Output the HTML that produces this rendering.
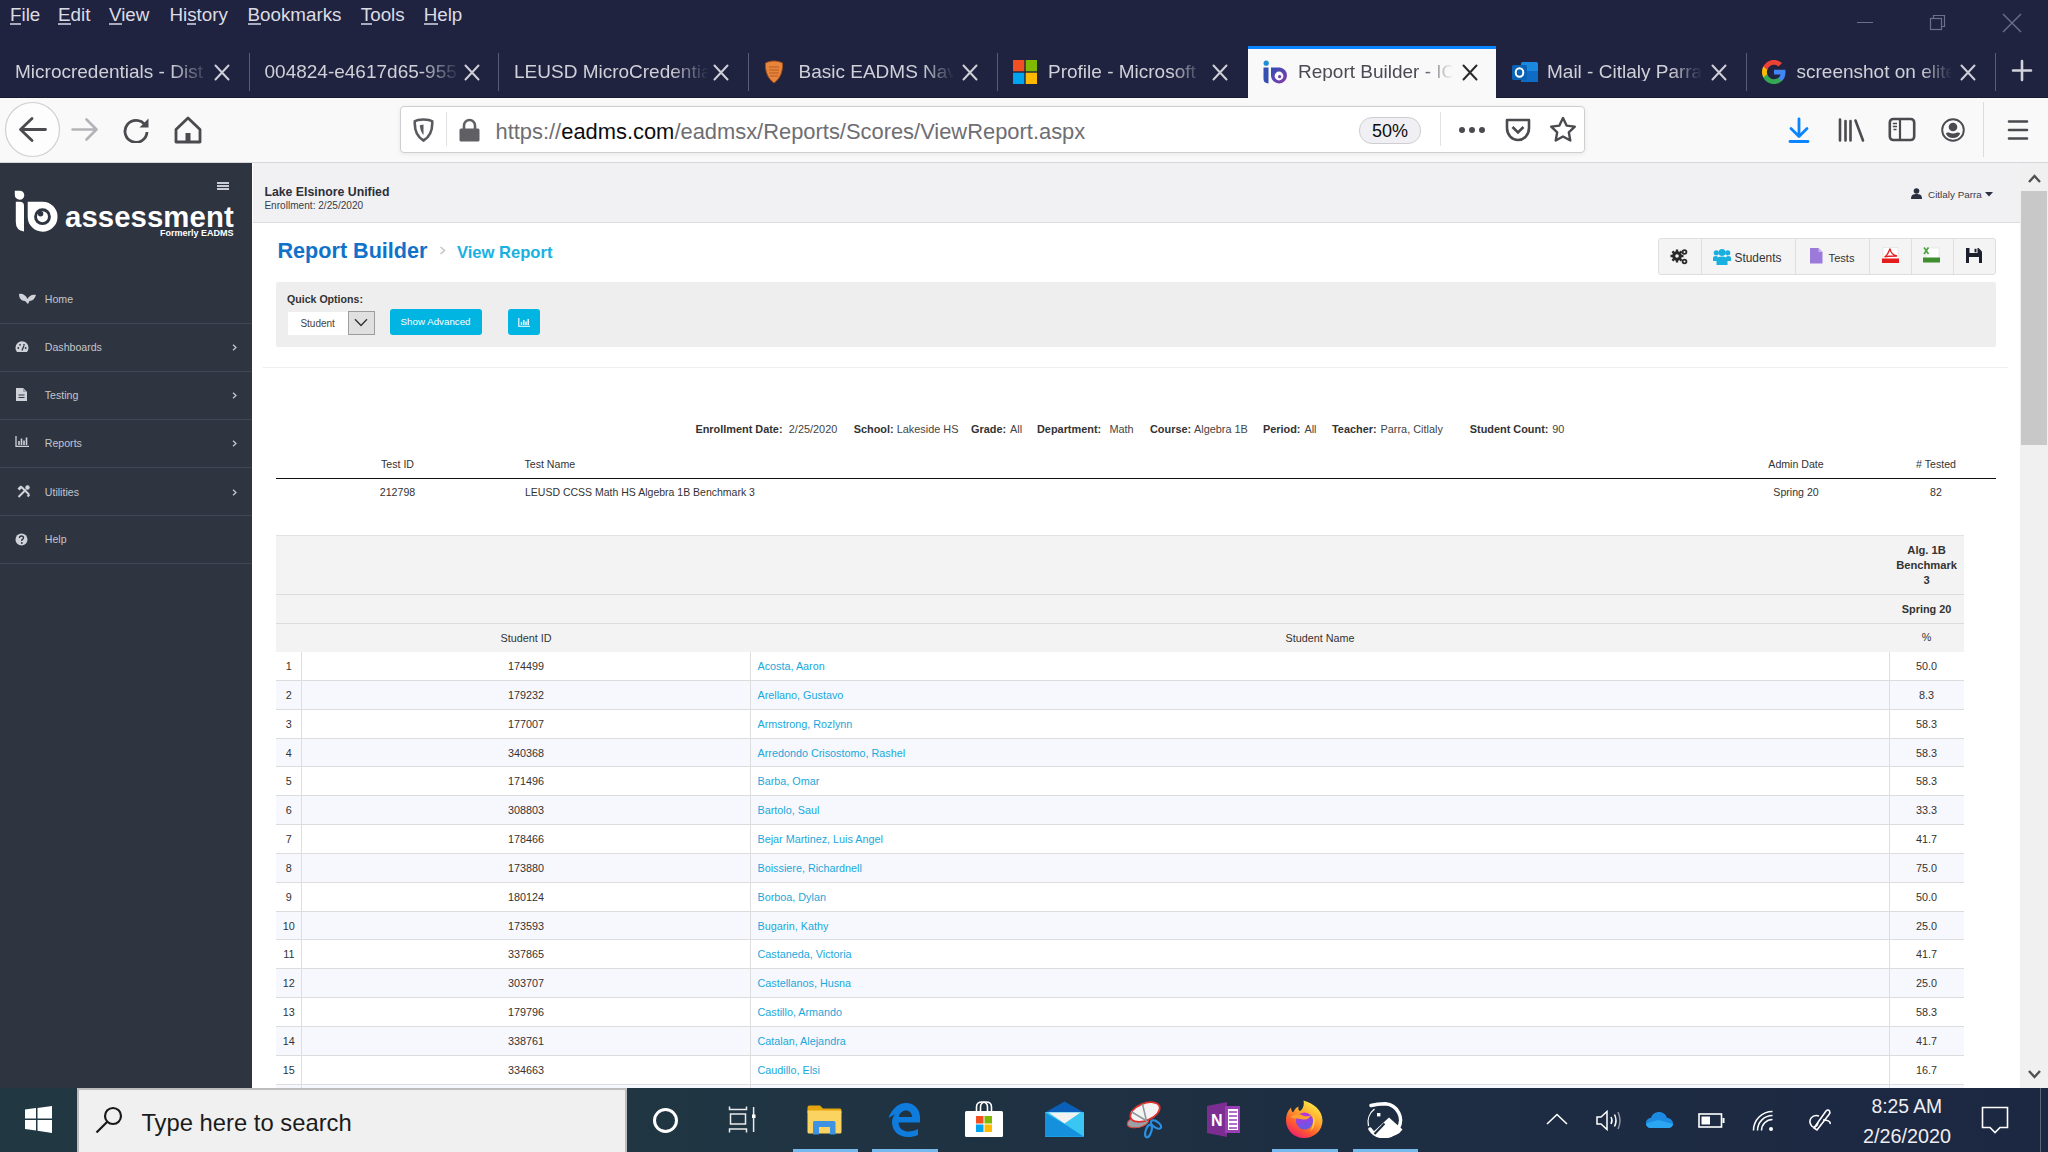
<!DOCTYPE html>
<html><head><meta charset="utf-8"><title>Report Builder</title>
<style>
html,body{margin:0;padding:0;}
body{width:2048px;height:1152px;overflow:hidden;position:relative;background:#fff;font-family:"Liberation Sans",sans-serif;}
.t{position:absolute;line-height:1;white-space:nowrap;}
.r{position:absolute;}
.fade{-webkit-mask-image:linear-gradient(to right,#000 80%,transparent 100%);mask-image:linear-gradient(to right,#000 80%,transparent 100%);overflow:hidden;}
</style></head><body>

<div class="r" style="left:0px;top:0px;width:2048px;height:98px;background:#202340;"></div>
<div class="r" style="left:0px;top:97px;width:2048px;height:1px;background:#181a30;"></div>
<div class="t " style="left:10.00px;top:5.99px;font-size:18.8px;color:#dcdce4;">File</div>
<div class="t " style="left:58.00px;top:5.99px;font-size:18.8px;color:#dcdce4;">Edit</div>
<div class="t " style="left:109.00px;top:5.99px;font-size:18.8px;color:#dcdce4;">View</div>
<div class="t " style="left:169.40px;top:5.99px;font-size:18.8px;color:#dcdce4;">History</div>
<div class="t " style="left:247.50px;top:5.99px;font-size:18.8px;color:#dcdce4;">Bookmarks</div>
<div class="t " style="left:360.80px;top:5.99px;font-size:18.8px;color:#dcdce4;">Tools</div>
<div class="t " style="left:423.70px;top:5.99px;font-size:18.8px;color:#dcdce4;">Help</div>
<div class="r" style="left:10px;top:23px;width:11px;height:2px;background:#a9aabb;"></div>
<div class="r" style="left:58px;top:23px;width:13px;height:2px;background:#a9aabb;"></div>
<div class="r" style="left:109px;top:23px;width:13px;height:2px;background:#a9aabb;"></div>
<div class="r" style="left:187px;top:23px;width:9px;height:2px;background:#a9aabb;"></div>
<div class="r" style="left:248px;top:23px;width:13px;height:2px;background:#a9aabb;"></div>
<div class="r" style="left:361px;top:23px;width:11px;height:2px;background:#a9aabb;"></div>
<div class="r" style="left:424px;top:23px;width:14px;height:2px;background:#a9aabb;"></div>
<div class="r" style="left:1857px;top:22px;width:16px;height:1px;background:#6d6f88;"></div>
<svg class="r" style="left:1928px;top:13px;" width="20" height="20" viewBox="0 0 20 20"><rect x="2.5" y="5.5" width="11" height="11" fill="none" stroke="#6d6f88" stroke-width="1.2"/><path d="M5.5 5.5V2.5h11v11h-3" fill="none" stroke="#6d6f88" stroke-width="1.2"/></svg>
<svg class="r" style="left:2002px;top:13px;" width="20" height="20" viewBox="0 0 20 20"><path d="M1 1L19 19M19 1L1 19" stroke="#6d6f88" stroke-width="1.4"/></svg>
<div class="r" style="left:1248px;top:46px;width:248px;height:52px;background:#f9f9fa;"></div>
<div class="r" style="left:1248px;top:46px;width:248px;height:3px;background:#0a84ff;"></div>
<div class="t fade" style="left:15.00px;top:62.42px;font-size:19px;color:#d0d0d8;width:195px;overflow:hidden;">Microcredentials - Dist</div>
<svg class="r" style="left:214px;top:64px;" width="16" height="17" viewBox="0 0 16 17"><path d="M1.5 1.5L14.5 15.5M14.5 1.5L1.5 15.5" stroke="#cfcfd8" stroke-width="2" stroke-linecap="round"/></svg>
<div class="t fade" style="left:264.50px;top:62.42px;font-size:19px;color:#d0d0d8;width:195px;overflow:hidden;">004824-e4617d65-955</div>
<svg class="r" style="left:464px;top:64px;" width="16" height="17" viewBox="0 0 16 17"><path d="M1.5 1.5L14.5 15.5M14.5 1.5L1.5 15.5" stroke="#cfcfd8" stroke-width="2" stroke-linecap="round"/></svg>
<div class="t fade" style="left:514.00px;top:62.42px;font-size:19px;color:#d0d0d8;width:195px;overflow:hidden;">LEUSD MicroCredentia</div>
<svg class="r" style="left:713px;top:64px;" width="16" height="17" viewBox="0 0 16 17"><path d="M1.5 1.5L14.5 15.5M14.5 1.5L1.5 15.5" stroke="#cfcfd8" stroke-width="2" stroke-linecap="round"/></svg>
<div class="t fade" style="left:798.50px;top:62.42px;font-size:19px;color:#d0d0d8;width:155px;overflow:hidden;">Basic EADMS Navi</div>
<svg class="r" style="left:962px;top:64px;" width="16" height="17" viewBox="0 0 16 17"><path d="M1.5 1.5L14.5 15.5M14.5 1.5L1.5 15.5" stroke="#cfcfd8" stroke-width="2" stroke-linecap="round"/></svg>
<div class="t fade" style="left:1048.00px;top:62.42px;font-size:19px;color:#d0d0d8;width:155px;overflow:hidden;">Profile - Microsoft</div>
<svg class="r" style="left:1212px;top:64px;" width="16" height="17" viewBox="0 0 16 17"><path d="M1.5 1.5L14.5 15.5M14.5 1.5L1.5 15.5" stroke="#cfcfd8" stroke-width="2" stroke-linecap="round"/></svg>
<div class="t fade" style="left:1298.00px;top:62.42px;font-size:19px;color:#4a4a54;width:155px;overflow:hidden;">Report Builder - IC</div>
<svg class="r" style="left:1462px;top:64px;" width="16" height="17" viewBox="0 0 16 17"><path d="M1.5 1.5L14.5 15.5M14.5 1.5L1.5 15.5" stroke="#2a2a2e" stroke-width="2" stroke-linecap="round"/></svg>
<div class="t fade" style="left:1547.00px;top:62.42px;font-size:19px;color:#d0d0d8;width:155px;overflow:hidden;">Mail - Citlaly Parra</div>
<svg class="r" style="left:1711px;top:64px;" width="16" height="17" viewBox="0 0 16 17"><path d="M1.5 1.5L14.5 15.5M14.5 1.5L1.5 15.5" stroke="#cfcfd8" stroke-width="2" stroke-linecap="round"/></svg>
<div class="t fade" style="left:1796.50px;top:62.42px;font-size:19px;color:#d0d0d8;width:155px;overflow:hidden;">screenshot on elite</div>
<svg class="r" style="left:1960px;top:64px;" width="16" height="17" viewBox="0 0 16 17"><path d="M1.5 1.5L14.5 15.5M14.5 1.5L1.5 15.5" stroke="#cfcfd8" stroke-width="2" stroke-linecap="round"/></svg>
<div class="r" style="left:249px;top:53px;width:1px;height:38px;background:#5a5c75;"></div>
<div class="r" style="left:498px;top:53px;width:1px;height:38px;background:#5a5c75;"></div>
<div class="r" style="left:748px;top:53px;width:1px;height:38px;background:#5a5c75;"></div>
<div class="r" style="left:997px;top:53px;width:1px;height:38px;background:#5a5c75;"></div>
<div class="r" style="left:1746px;top:53px;width:1px;height:38px;background:#5a5c75;"></div>
<div class="r" style="left:1995px;top:53px;width:1px;height:38px;background:#5a5c75;"></div>
<svg class="r" style="left:2011px;top:59px;" width="22" height="23" viewBox="0 0 22 23"><path d="M11 2V21M2 11.5H20" stroke="#d2d2dc" stroke-width="2.6" stroke-linecap="round"/></svg>
<div class="r" style="left:0px;top:98px;width:2048px;height:64px;background:#f9f9fa;"></div>
<div class="r" style="left:0px;top:162px;width:2048px;height:1px;background:#d7d7db;"></div>
<div class="r" style="left:400px;top:106px;width:1185px;height:47px;background:#ffffff;border:1px solid #cfcfd3;border-radius:4px;box-sizing:border-box;box-shadow:0 1px 4px rgba(0,0,0,0.08);"></div>
<div class="r" style="left:446px;top:112px;width:1px;height:34px;background:#e2e2e5;"></div>
<div class="r" style="left:1440px;top:112px;width:1px;height:34px;background:#e2e2e5;"></div>
<div class="r" style="left:1983px;top:102px;width:1px;height:55px;background:#dcdcdf;"></div>
<div class="t " style="left:495.50px;top:120.96px;font-size:21.9px;color:#6e6e73;"><span style="color:#6e6e73">https://</span><span style="color:#0c0c0d">eadms.com</span><span style="color:#6e6e73">/eadmsx/Reports/Scores/ViewReport.aspx</span></div>
<div class="r" style="left:1359px;top:117px;width:62px;height:27px;background:#f0f0f4;border:1px solid #cdcdd2;border-radius:13px;box-sizing:border-box;"></div>
<div class="t" style="left:1360.00px;width:60px;text-align:center;top:122.26px;font-size:18px;color:#0c0c0d;">50%</div>
<div class="r" style="left:253px;top:163px;width:1768px;height:59px;background:#f1f1f3;"></div>
<div class="r" style="left:253px;top:222px;width:1768px;height:1px;background:#dcdcdf;"></div>
<div class="t " style="left:264.40px;top:186.49px;font-size:12.3px;color:#2d2f38;font-weight:bold;">Lake Elsinore Unified</div>
<div class="t " style="left:264.40px;top:201.25px;font-size:10.1px;color:#3a3c44;">Enrollment: 2/25/2020</div>
<svg class="r" style="left:1911px;top:188px;" width="11" height="11" viewBox="0 0 11 11"><circle cx="5.5" cy="3" r="2.8" fill="#2b3040"/><path d="M0 11C0 6.5 2.5 6 5.5 6S11 6.5 11 11Z" fill="#2b3040"/></svg>
<div class="t " style="left:1928.00px;top:189.92px;font-size:9.9px;color:#3a3c48;">Citlaly Parra</div>
<svg class="r" style="left:1985px;top:192px;" width="8" height="5" viewBox="0 0 8 5"><path d="M0 0H8L4 4.5Z" fill="#2b3040"/></svg>
<div class="r" style="left:2020px;top:163px;width:28px;height:925px;background:#f0f0f0;"></div>
<div class="r" style="left:2021px;top:190.5px;width:26px;height:254px;background:#c8c8c8;"></div>
<svg class="r" style="left:2028px;top:173px;" width="13" height="11" viewBox="0 0 13 11"><path d="M1 9L6.5 3L12 9" fill="none" stroke="#505050" stroke-width="2.4"/></svg>
<svg class="r" style="left:2028px;top:1069px;" width="13" height="11" viewBox="0 0 13 11"><path d="M1 2L6.5 8L12 2" fill="none" stroke="#505050" stroke-width="2.4"/></svg>
<div class="r" style="left:0px;top:163px;width:252px;height:925px;background:#2f3441;"></div>
<div class="r" style="left:217px;top:182px;width:12px;height:1.5px;background:#c9ccd3;"></div>
<div class="r" style="left:217px;top:185px;width:12px;height:1.5px;background:#c9ccd3;"></div>
<div class="r" style="left:217px;top:188px;width:12px;height:1.5px;background:#c9ccd3;"></div>
<div class="r" style="left:0px;top:322.5px;width:252px;height:1px;background:#404654;"></div>
<div class="r" style="left:0px;top:370.5px;width:252px;height:1px;background:#404654;"></div>
<div class="r" style="left:0px;top:418.5px;width:252px;height:1px;background:#404654;"></div>
<div class="r" style="left:0px;top:466.5px;width:252px;height:1px;background:#404654;"></div>
<div class="r" style="left:0px;top:515px;width:252px;height:1px;background:#404654;"></div>
<div class="r" style="left:0px;top:563px;width:252px;height:1px;background:#404654;"></div>
<div class="t " style="left:44.80px;top:294.23px;font-size:10.6px;color:#c3c6cd;">Home</div>
<div class="t " style="left:44.80px;top:341.53px;font-size:10.6px;color:#c3c6cd;">Dashboards</div>
<svg class="r" style="left:232px;top:343.5px;" width="5" height="7" viewBox="0 0 5 7"><path d="M1 0.8L4 3.5L1 6.2" fill="none" stroke="#c3c6cd" stroke-width="1.3"/></svg>
<div class="t " style="left:44.80px;top:389.53px;font-size:10.6px;color:#c3c6cd;">Testing</div>
<svg class="r" style="left:232px;top:391.5px;" width="5" height="7" viewBox="0 0 5 7"><path d="M1 0.8L4 3.5L1 6.2" fill="none" stroke="#c3c6cd" stroke-width="1.3"/></svg>
<div class="t " style="left:44.80px;top:437.53px;font-size:10.6px;color:#c3c6cd;">Reports</div>
<svg class="r" style="left:232px;top:439.5px;" width="5" height="7" viewBox="0 0 5 7"><path d="M1 0.8L4 3.5L1 6.2" fill="none" stroke="#c3c6cd" stroke-width="1.3"/></svg>
<div class="t " style="left:44.80px;top:486.53px;font-size:10.6px;color:#c3c6cd;">Utilities</div>
<svg class="r" style="left:232px;top:488.5px;" width="5" height="7" viewBox="0 0 5 7"><path d="M1 0.8L4 3.5L1 6.2" fill="none" stroke="#c3c6cd" stroke-width="1.3"/></svg>
<div class="t " style="left:44.80px;top:534.23px;font-size:10.6px;color:#c3c6cd;">Help</div>
<div class="t " style="left:277.50px;top:239.92px;font-size:21.6px;color:#1172c9;font-weight:bold;">Report Builder</div>
<svg class="r" style="left:439px;top:246px;" width="7" height="9" viewBox="0 0 7 9"><path d="M1.5 1L5.5 4.5L1.5 8" fill="none" stroke="#c4c4c4" stroke-width="1.5"/></svg>
<div class="t " style="left:456.90px;top:244.55px;font-size:16.6px;color:#19b1e2;font-weight:bold;">View Report</div>
<div class="r" style="left:1658px;top:238px;width:338px;height:37px;background:#f4f4f4;border:1px solid #dedede;border-radius:3px;box-sizing:border-box;"></div>
<div class="r" style="left:1700.5px;top:239px;width:1px;height:35px;background:#dedede;"></div>
<div class="r" style="left:1794.7px;top:239px;width:1px;height:35px;background:#dedede;"></div>
<div class="r" style="left:1869px;top:239px;width:1px;height:35px;background:#dedede;"></div>
<div class="r" style="left:1910.6px;top:239px;width:1px;height:35px;background:#dedede;"></div>
<div class="r" style="left:1952.9px;top:239px;width:1px;height:35px;background:#dedede;"></div>
<div class="t " style="left:1734.50px;top:252.73px;font-size:11.9px;color:#333;">Students</div>
<div class="t " style="left:1828.60px;top:253.40px;font-size:11.1px;color:#333;">Tests</div>
<div class="r" style="left:276px;top:282px;width:1720px;height:65px;background:#eeeeee;border-radius:2px;"></div>
<div class="t " style="left:287.00px;top:294.03px;font-size:10.6px;color:#333;font-weight:bold;">Quick Options:</div>
<div class="r" style="left:288px;top:312px;width:60px;height:23px;background:#ffffff;"></div>
<div class="t " style="left:300.40px;top:319.14px;font-size:10.0px;color:#444;">Student</div>
<div class="r" style="left:348px;top:311px;width:27px;height:24px;background:#e0e0e0;border:1px solid #9d9d9d;box-sizing:border-box;"></div>
<svg class="r" style="left:354px;top:318px;" width="14" height="9" viewBox="0 0 14 9"><path d="M1 1.2L7 7.5L13 1.2" fill="none" stroke="#333" stroke-width="1.4"/></svg>
<div class="r" style="left:390px;top:309px;width:92px;height:26px;background:#00b5e2;border-radius:3px;"></div>
<div class="t " style="left:400.60px;top:317.34px;font-size:9.76px;color:#ffffff;">Show Advanced</div>
<div class="r" style="left:508px;top:309px;width:32px;height:26px;background:#00b5e2;border-radius:3px;"></div>
<div class="r" style="left:263px;top:366.5px;width:1745px;height:1px;background:#eeeeee;"></div>
<div class="t " style="left:695.40px;top:424.07px;font-size:10.9px;color:#333;font-weight:bold;">Enrollment Date:</div>
<div class="t " style="left:788.80px;top:424.07px;font-size:10.9px;color:#444;">2/25/2020</div>
<div class="t " style="left:853.70px;top:424.07px;font-size:10.9px;color:#333;font-weight:bold;">School:</div>
<div class="t " style="left:896.70px;top:424.07px;font-size:10.9px;color:#444;">Lakeside HS</div>
<div class="t " style="left:971.00px;top:424.07px;font-size:10.9px;color:#333;font-weight:bold;">Grade:</div>
<div class="t " style="left:1010.00px;top:424.07px;font-size:10.9px;color:#444;">All</div>
<div class="t " style="left:1037.00px;top:424.07px;font-size:10.9px;color:#333;font-weight:bold;">Department:</div>
<div class="t " style="left:1109.40px;top:424.07px;font-size:10.9px;color:#444;">Math</div>
<div class="t " style="left:1150.00px;top:424.07px;font-size:10.9px;color:#333;font-weight:bold;">Course:</div>
<div class="t " style="left:1194.00px;top:424.07px;font-size:10.9px;color:#444;">Algebra 1B</div>
<div class="t " style="left:1262.90px;top:424.07px;font-size:10.9px;color:#333;font-weight:bold;">Period:</div>
<div class="t " style="left:1304.40px;top:424.07px;font-size:10.9px;color:#444;">All</div>
<div class="t " style="left:1332.00px;top:424.07px;font-size:10.9px;color:#333;font-weight:bold;">Teacher:</div>
<div class="t " style="left:1380.50px;top:424.07px;font-size:10.9px;color:#444;">Parra, Citlaly</div>
<div class="t " style="left:1469.80px;top:424.07px;font-size:10.9px;color:#333;font-weight:bold;">Student Count:</div>
<div class="t " style="left:1552.30px;top:424.07px;font-size:10.9px;color:#444;">90</div>
<div class="t" style="left:297.50px;width:200px;text-align:center;top:459.33px;font-size:10.6px;color:#333;">Test ID</div>
<div class="t " style="left:524.50px;top:459.33px;font-size:10.6px;color:#333;">Test Name</div>
<div class="t" style="left:1696.00px;width:200px;text-align:center;top:459.33px;font-size:10.6px;color:#333;">Admin Date</div>
<div class="t" style="left:1836.00px;width:200px;text-align:center;top:459.33px;font-size:10.6px;color:#333;"># Tested</div>
<div class="r" style="left:276px;top:477.5px;width:1720px;height:1.6px;background:#111;"></div>
<div class="t" style="left:297.50px;width:200px;text-align:center;top:487.23px;font-size:10.6px;color:#333;">212798</div>
<div class="t " style="left:525.00px;top:487.31px;font-size:10.5px;color:#333;">LEUSD CCSS Math HS Algebra 1B Benchmark 3</div>
<div class="t" style="left:1696.00px;width:200px;text-align:center;top:487.23px;font-size:10.6px;color:#333;">Spring 20</div>
<div class="t" style="left:1836.00px;width:200px;text-align:center;top:487.23px;font-size:10.6px;color:#333;">82</div>
<div class="r" style="left:276px;top:535.5px;width:1688px;height:116px;background:#f3f3f3;"></div>
<div class="r" style="left:276px;top:535px;width:1688px;height:1.2px;background:#e2e2e2;"></div>
<div class="r" style="left:276px;top:594px;width:1688px;height:1px;background:#dcdcdc;"></div>
<div class="r" style="left:276px;top:623px;width:1688px;height:1px;background:#dcdcdc;"></div>
<div class="t" style="left:1866.60px;width:120px;text-align:center;top:545.22px;font-size:11.2px;color:#333;font-weight:bold;">Alg. 1B</div>
<div class="t" style="left:1866.60px;width:120px;text-align:center;top:560.02px;font-size:11.2px;color:#333;font-weight:bold;">Benchmark</div>
<div class="t" style="left:1866.60px;width:120px;text-align:center;top:574.82px;font-size:11.2px;color:#333;font-weight:bold;">3</div>
<div class="t" style="left:1866.60px;width:120px;text-align:center;top:604.17px;font-size:10.9px;color:#333;font-weight:bold;">Spring 20</div>
<div class="t" style="left:426.00px;width:200px;text-align:center;top:633.06px;font-size:10.8px;color:#333;">Student ID</div>
<div class="t" style="left:1220.00px;width:200px;text-align:center;top:633.06px;font-size:10.8px;color:#333;">Student Name</div>
<div class="t" style="left:1896.60px;width:60px;text-align:center;top:632.46px;font-size:10.8px;color:#333;">%</div>
<div class="r" style="left:276px;top:652px;width:1688px;height:28px;background:#ffffff;"></div>
<div class="r" style="left:276px;top:680px;width:1688px;height:29px;background:#f7f8fd;"></div>
<div class="r" style="left:276px;top:709px;width:1688px;height:29px;background:#ffffff;"></div>
<div class="r" style="left:276px;top:738px;width:1688px;height:29px;background:#f7f8fd;"></div>
<div class="r" style="left:276px;top:767px;width:1688px;height:29px;background:#ffffff;"></div>
<div class="r" style="left:276px;top:796px;width:1688px;height:29px;background:#f7f8fd;"></div>
<div class="r" style="left:276px;top:825px;width:1688px;height:28px;background:#ffffff;"></div>
<div class="r" style="left:276px;top:853px;width:1688px;height:29px;background:#f7f8fd;"></div>
<div class="r" style="left:276px;top:882px;width:1688px;height:29px;background:#ffffff;"></div>
<div class="r" style="left:276px;top:911px;width:1688px;height:29px;background:#f7f8fd;"></div>
<div class="r" style="left:276px;top:940px;width:1688px;height:29px;background:#ffffff;"></div>
<div class="r" style="left:276px;top:969px;width:1688px;height:29px;background:#f7f8fd;"></div>
<div class="r" style="left:276px;top:998px;width:1688px;height:28px;background:#ffffff;"></div>
<div class="r" style="left:276px;top:1026px;width:1688px;height:29px;background:#f7f8fd;"></div>
<div class="r" style="left:276px;top:1055px;width:1688px;height:29px;background:#ffffff;"></div>
<div class="r" style="left:276px;top:1084px;width:1688px;height:29px;background:#f7f8fd;"></div>
<div class="r" style="left:276px;top:680px;width:1688px;height:1px;background:#dcdcdc;"></div>
<div class="r" style="left:276px;top:709px;width:1688px;height:1px;background:#dcdcdc;"></div>
<div class="r" style="left:276px;top:738px;width:1688px;height:1px;background:#dcdcdc;"></div>
<div class="r" style="left:276px;top:766px;width:1688px;height:1px;background:#dcdcdc;"></div>
<div class="r" style="left:276px;top:795px;width:1688px;height:1px;background:#dcdcdc;"></div>
<div class="r" style="left:276px;top:824px;width:1688px;height:1px;background:#dcdcdc;"></div>
<div class="r" style="left:276px;top:853px;width:1688px;height:1px;background:#dcdcdc;"></div>
<div class="r" style="left:276px;top:882px;width:1688px;height:1px;background:#dcdcdc;"></div>
<div class="r" style="left:276px;top:911px;width:1688px;height:1px;background:#dcdcdc;"></div>
<div class="r" style="left:276px;top:939px;width:1688px;height:1px;background:#dcdcdc;"></div>
<div class="r" style="left:276px;top:968px;width:1688px;height:1px;background:#dcdcdc;"></div>
<div class="r" style="left:276px;top:997px;width:1688px;height:1px;background:#dcdcdc;"></div>
<div class="r" style="left:276px;top:1026px;width:1688px;height:1px;background:#dcdcdc;"></div>
<div class="r" style="left:276px;top:1055px;width:1688px;height:1px;background:#dcdcdc;"></div>
<div class="r" style="left:276px;top:1084px;width:1688px;height:1px;background:#dcdcdc;"></div>
<div class="r" style="left:276px;top:1112px;width:1688px;height:1px;background:#dcdcdc;"></div>
<div class="r" style="left:301px;top:651.6px;width:1px;height:437px;background:#dedede;"></div>
<div class="r" style="left:750px;top:651.6px;width:1px;height:437px;background:#dedede;"></div>
<div class="r" style="left:1889px;top:651.6px;width:1px;height:437px;background:#dedede;"></div>
<div class="t" style="left:273.80px;width:30px;text-align:center;top:661.16px;font-size:10.8px;color:#333;">1</div>
<div class="t" style="left:426.00px;width:200px;text-align:center;top:661.16px;font-size:10.8px;color:#333;">174499</div>
<div class="t " style="left:757.50px;top:661.16px;font-size:10.8px;color:#19a8dc;">Acosta, Aaron</div>
<div class="t" style="left:1896.60px;width:60px;text-align:center;top:661.16px;font-size:10.8px;color:#333;">50.0</div>
<div class="t" style="left:273.80px;width:30px;text-align:center;top:689.99px;font-size:10.8px;color:#333;">2</div>
<div class="t" style="left:426.00px;width:200px;text-align:center;top:689.99px;font-size:10.8px;color:#333;">179232</div>
<div class="t " style="left:757.50px;top:689.99px;font-size:10.8px;color:#19a8dc;">Arellano, Gustavo</div>
<div class="t" style="left:1896.60px;width:60px;text-align:center;top:689.99px;font-size:10.8px;color:#333;">8.3</div>
<div class="t" style="left:273.80px;width:30px;text-align:center;top:718.82px;font-size:10.8px;color:#333;">3</div>
<div class="t" style="left:426.00px;width:200px;text-align:center;top:718.82px;font-size:10.8px;color:#333;">177007</div>
<div class="t " style="left:757.50px;top:718.82px;font-size:10.8px;color:#19a8dc;">Armstrong, Rozlynn</div>
<div class="t" style="left:1896.60px;width:60px;text-align:center;top:718.82px;font-size:10.8px;color:#333;">58.3</div>
<div class="t" style="left:273.80px;width:30px;text-align:center;top:747.65px;font-size:10.8px;color:#333;">4</div>
<div class="t" style="left:426.00px;width:200px;text-align:center;top:747.65px;font-size:10.8px;color:#333;">340368</div>
<div class="t " style="left:757.50px;top:747.65px;font-size:10.8px;color:#19a8dc;">Arredondo Crisostomo, Rashel</div>
<div class="t" style="left:1896.60px;width:60px;text-align:center;top:747.65px;font-size:10.8px;color:#333;">58.3</div>
<div class="t" style="left:273.80px;width:30px;text-align:center;top:776.48px;font-size:10.8px;color:#333;">5</div>
<div class="t" style="left:426.00px;width:200px;text-align:center;top:776.48px;font-size:10.8px;color:#333;">171496</div>
<div class="t " style="left:757.50px;top:776.48px;font-size:10.8px;color:#19a8dc;">Barba, Omar</div>
<div class="t" style="left:1896.60px;width:60px;text-align:center;top:776.48px;font-size:10.8px;color:#333;">58.3</div>
<div class="t" style="left:273.80px;width:30px;text-align:center;top:805.31px;font-size:10.8px;color:#333;">6</div>
<div class="t" style="left:426.00px;width:200px;text-align:center;top:805.31px;font-size:10.8px;color:#333;">308803</div>
<div class="t " style="left:757.50px;top:805.31px;font-size:10.8px;color:#19a8dc;">Bartolo, Saul</div>
<div class="t" style="left:1896.60px;width:60px;text-align:center;top:805.31px;font-size:10.8px;color:#333;">33.3</div>
<div class="t" style="left:273.80px;width:30px;text-align:center;top:834.14px;font-size:10.8px;color:#333;">7</div>
<div class="t" style="left:426.00px;width:200px;text-align:center;top:834.14px;font-size:10.8px;color:#333;">178466</div>
<div class="t " style="left:757.50px;top:834.14px;font-size:10.8px;color:#19a8dc;">Bejar Martinez, Luis Angel</div>
<div class="t" style="left:1896.60px;width:60px;text-align:center;top:834.14px;font-size:10.8px;color:#333;">41.7</div>
<div class="t" style="left:273.80px;width:30px;text-align:center;top:862.97px;font-size:10.8px;color:#333;">8</div>
<div class="t" style="left:426.00px;width:200px;text-align:center;top:862.97px;font-size:10.8px;color:#333;">173880</div>
<div class="t " style="left:757.50px;top:862.97px;font-size:10.8px;color:#19a8dc;">Boissiere, Richardnell</div>
<div class="t" style="left:1896.60px;width:60px;text-align:center;top:862.97px;font-size:10.8px;color:#333;">75.0</div>
<div class="t" style="left:273.80px;width:30px;text-align:center;top:891.80px;font-size:10.8px;color:#333;">9</div>
<div class="t" style="left:426.00px;width:200px;text-align:center;top:891.80px;font-size:10.8px;color:#333;">180124</div>
<div class="t " style="left:757.50px;top:891.80px;font-size:10.8px;color:#19a8dc;">Borboa, Dylan</div>
<div class="t" style="left:1896.60px;width:60px;text-align:center;top:891.80px;font-size:10.8px;color:#333;">50.0</div>
<div class="t" style="left:273.80px;width:30px;text-align:center;top:920.63px;font-size:10.8px;color:#333;">10</div>
<div class="t" style="left:426.00px;width:200px;text-align:center;top:920.63px;font-size:10.8px;color:#333;">173593</div>
<div class="t " style="left:757.50px;top:920.63px;font-size:10.8px;color:#19a8dc;">Bugarin, Kathy</div>
<div class="t" style="left:1896.60px;width:60px;text-align:center;top:920.63px;font-size:10.8px;color:#333;">25.0</div>
<div class="t" style="left:273.80px;width:30px;text-align:center;top:949.46px;font-size:10.8px;color:#333;">11</div>
<div class="t" style="left:426.00px;width:200px;text-align:center;top:949.46px;font-size:10.8px;color:#333;">337865</div>
<div class="t " style="left:757.50px;top:949.46px;font-size:10.8px;color:#19a8dc;">Castaneda, Victoria</div>
<div class="t" style="left:1896.60px;width:60px;text-align:center;top:949.46px;font-size:10.8px;color:#333;">41.7</div>
<div class="t" style="left:273.80px;width:30px;text-align:center;top:978.29px;font-size:10.8px;color:#333;">12</div>
<div class="t" style="left:426.00px;width:200px;text-align:center;top:978.29px;font-size:10.8px;color:#333;">303707</div>
<div class="t " style="left:757.50px;top:978.29px;font-size:10.8px;color:#19a8dc;">Castellanos, Husna</div>
<div class="t" style="left:1896.60px;width:60px;text-align:center;top:978.29px;font-size:10.8px;color:#333;">25.0</div>
<div class="t" style="left:273.80px;width:30px;text-align:center;top:1007.12px;font-size:10.8px;color:#333;">13</div>
<div class="t" style="left:426.00px;width:200px;text-align:center;top:1007.12px;font-size:10.8px;color:#333;">179796</div>
<div class="t " style="left:757.50px;top:1007.12px;font-size:10.8px;color:#19a8dc;">Castillo, Armando</div>
<div class="t" style="left:1896.60px;width:60px;text-align:center;top:1007.12px;font-size:10.8px;color:#333;">58.3</div>
<div class="t" style="left:273.80px;width:30px;text-align:center;top:1035.95px;font-size:10.8px;color:#333;">14</div>
<div class="t" style="left:426.00px;width:200px;text-align:center;top:1035.95px;font-size:10.8px;color:#333;">338761</div>
<div class="t " style="left:757.50px;top:1035.95px;font-size:10.8px;color:#19a8dc;">Catalan, Alejandra</div>
<div class="t" style="left:1896.60px;width:60px;text-align:center;top:1035.95px;font-size:10.8px;color:#333;">41.7</div>
<div class="t" style="left:273.80px;width:30px;text-align:center;top:1064.78px;font-size:10.8px;color:#333;">15</div>
<div class="t" style="left:426.00px;width:200px;text-align:center;top:1064.78px;font-size:10.8px;color:#333;">334663</div>
<div class="t " style="left:757.50px;top:1064.78px;font-size:10.8px;color:#19a8dc;">Caudillo, Elsi</div>
<div class="t" style="left:1896.60px;width:60px;text-align:center;top:1064.78px;font-size:10.8px;color:#333;">16.7</div>
<div class="r" style="left:0px;top:1088px;width:2048px;height:64px;background:linear-gradient(to right,#213843 0%,#203642 30%,#1e2f42 60%,#1c2742 100%);"></div>
<div class="r" style="left:2040px;top:1088px;width:1px;height:64px;background:#5b6676;"></div>
<svg class="r" style="left:25px;top:1106px;" width="27" height="27" viewBox="0 0 27 27"><path d="M0 3.6L11 2.1V12.6H0Z M12.5 1.9L27 0V12.6H12.5Z M0 14.1H11V24.6L0 23.1Z M12.5 14.1H27V27L12.5 24.8Z" fill="#ffffff"/></svg>
<div class="r" style="left:77px;top:1088px;width:550px;height:64px;background:#f0f0f0;border:2px solid #bcbcbc;border-bottom:none;box-sizing:border-box;"></div>
<svg class="r" style="left:95px;top:1106px;" width="28" height="28" viewBox="0 0 28 28"><circle cx="18" cy="10" r="8" fill="none" stroke="#1a1a1a" stroke-width="2.2"/><path d="M12.3 15.7L1.5 26.5" stroke="#1a1a1a" stroke-width="2.2"/></svg>
<div class="t " style="left:141.40px;top:1110.65px;font-size:23.8px;color:#1b1b1b;">Type here to search</div>
<svg class="r" style="left:651px;top:1106px;" width="29" height="29" viewBox="0 0 29 29"><circle cx="14.5" cy="14.5" r="11" fill="none" stroke="#ffffff" stroke-width="3"/></svg>
<svg class="r" style="left:728px;top:1106px;" width="30" height="28" viewBox="0 0 30 28"><g fill="none" stroke="#e8eaec" stroke-width="1.5"><path d="M1.5 0.5V3.5H18.5V0.5"/><rect x="2.5" y="8" width="15" height="10"/><path d="M1.5 26.5V23H18.5V26.5"/><path d="M25.6 1V26"/></g><rect x="24" y="8.5" width="3.5" height="3.5" fill="#fff"/></svg>
<div class="r" style="left:793px;top:1149px;width:65px;height:3px;background:#76b9ed;"></div>
<div class="r" style="left:872px;top:1149px;width:66px;height:3px;background:#76b9ed;"></div>
<div class="r" style="left:1272px;top:1149px;width:66px;height:3px;background:#76b9ed;"></div>
<div class="r" style="left:1353px;top:1149px;width:65px;height:3px;background:#76b9ed;"></div>
<svg class="r" style="left:807px;top:1105px;" width="35" height="30" viewBox="0 0 35 30"><path d="M0.5 2.5Q0.5 0.5 2.5 0.5H13L16 3.5H33Q34.5 3.5 34.5 5V8H0.5Z" fill="#e5a50f"/><path d="M0.5 5.5H33Q34.5 5.5 34.5 7V27Q34.5 28.5 33 28.5H2Q0.5 28.5 0.5 27Z" fill="#fbd360"/><path d="M6 29.5V17.5Q6 16 7.5 16H27Q28.5 16 28.5 17.5V29.5H23V22H12V29.5Z" fill="#3d93e2"/></svg>
<svg class="r" style="left:888px;top:1102px;" width="33" height="36" viewBox="0 0 33 36"><path fill-rule="evenodd" fill="#0f7bdc" d="M0.5 16C3 9 9 1.5 17 1C26 0.5 32 7 32 15.5V20.5H10.5C11 27 15.5 29.5 20.5 29.5C24 29.5 27.5 28.5 30 27V33C27 34.5 23.5 35 20 35C10 35 4 28.5 4 20C4 17 5 14.5 7 12.5C4.5 13.5 2 15 0.5 16ZM10.8 15C11.5 11 14.5 8.5 18 8.5C21.5 8.5 24 11 24 15Z"/></svg>
<svg class="r" style="left:965px;top:1101px;" width="38" height="36" viewBox="0 0 38 36"><path d="M11.5 10V6Q11.5 1 17 1Q22.5 1 22.5 6V10" fill="none" stroke="#fff" stroke-width="1.6"/><path d="M15.5 10V6Q15.5 1 21 1Q26.5 1 26.5 6V10" fill="none" stroke="#fff" stroke-width="1.6"/><rect x="0" y="10" width="38" height="26" rx="1.5" fill="#ffffff"/><rect x="11" y="15" width="7.5" height="7.5" fill="#f25022"/><rect x="19.5" y="15" width="7.5" height="7.5" fill="#7fba00"/><rect x="11" y="23.5" width="7.5" height="7.5" fill="#00a4ef"/><rect x="19.5" y="23.5" width="7.5" height="7.5" fill="#ffb900"/></svg>
<svg class="r" style="left:1045px;top:1101px;" width="39" height="36" viewBox="0 0 39 36"><path d="M0 11.5L19.5 0.5L39 11.5Z" fill="#0a5fb8"/><rect x="0" y="11" width="39" height="25" rx="1" fill="#3ac6f3"/><path d="M3.5 11.5H35.5L19.5 22.5Z" fill="#f2f2f2"/><path d="M0 11.5L19.5 23L39 35.8H1Q0 35.8 0 34.8Z" fill="#1590dd"/></svg>
<svg class="r" style="left:1126px;top:1101px;" width="37" height="38" viewBox="0 0 37 38"><ellipse cx="12" cy="21" rx="11" ry="5.5" transform="rotate(-12 12 21)" fill="#9ba1a7" stroke="#d9453a" stroke-width="1"/><ellipse cx="19" cy="11" rx="15.5" ry="8.5" transform="rotate(-22 19 11)" fill="#f3f3f3" stroke="#e0322c" stroke-width="1.8"/><path d="M16.5 3L20.5 20M5 10.5L20 19.5" stroke="#8f959c" stroke-width="1.5"/><ellipse cx="22.5" cy="30" rx="2.8" ry="6.5" transform="rotate(18 22.5 30)" fill="none" stroke="#2a8fe0" stroke-width="2.2"/><ellipse cx="30" cy="23.5" rx="5.8" ry="3" transform="rotate(35 30 23.5)" fill="none" stroke="#2a8fe0" stroke-width="2.2"/></svg>
<svg class="r" style="left:1207px;top:1102px;" width="35" height="35" viewBox="0 0 35 35"><path d="M0 4L20 0V35L0 31Z" fill="#7b2d91"/><rect x="18" y="4" width="15" height="27" fill="#9a3fb5"/><rect x="21" y="7" width="10" height="21" fill="#ffffff"/><path d="M22 10H30M22 14H30M22 18H30M22 22H30M22 26H30" stroke="#9a3fb5" stroke-width="1.5"/><text x="4" y="24" font-family="Liberation Sans" font-weight="bold" font-size="16" fill="#fff">N</text></svg>
<svg class="r" style="left:1285px;top:1100px;" width="38" height="38" viewBox="0 0 38 38"><defs><linearGradient id="ffo" x1="0.8" y1="0" x2="0.2" y2="1"><stop offset="0" stop-color="#fff44f"/><stop offset="0.35" stop-color="#ffb02e"/><stop offset="0.7" stop-color="#ff5a2e"/><stop offset="1" stop-color="#f0167a"/></linearGradient><linearGradient id="ffp" x1="0.3" y1="0" x2="0.5" y2="1"><stop offset="0" stop-color="#c030d8"/><stop offset="1" stop-color="#5f5ce8"/></linearGradient></defs><path d="M19 38C8.5 38 1 30 1 20C1 15 2.5 11 6 7.5C6.2 10 7 11.8 8.2 12.5C9.5 9.5 11 7.5 13.5 6.5C13 9 13.5 10.5 15 11C18 9 19.5 5 18.5 0.5C28 3 37.5 10 37.5 20.5C37.5 30.5 29.5 38 19 38Z" fill="url(#ffo)"/><circle cx="19.5" cy="21" r="8.6" fill="url(#ffp)"/><path d="M5.5 17.5C9 14 14 13.5 18 15.5C21.5 17 24 16.5 26 14.5C25 18 22 20 18.5 19.5C14.5 19 10 18 5.5 17.5Z" fill="#ff9f2e"/><path d="M27.5 14C31 19 31 27 25 31.5C29 25 28.5 19 27.5 14Z" fill="#ffcf3a"/></svg>
<svg class="r" style="left:1365px;top:1102px;" width="40" height="36" viewBox="0 0 40 36"><path d="M6 3.5Q12 1.8 20.5 1.8A16.5 16.5 0 1 1 5 27" fill="none" stroke="#fff" stroke-width="3.4" stroke-linecap="round"/><path d="M3.5 24A16.5 16.5 0 0 1 9.5 7" fill="none" stroke="#fff" stroke-width="1.3"/><path d="M7 31L24 15.5L37.5 27.5Q33 34.5 21 35Q12 35 7 31Z" fill="#fff"/><path d="M9.5 32L19.5 21.5" stroke="#1f3142" stroke-width="2.2"/><rect x="12" y="11" width="3.4" height="3.4" fill="#fff"/></svg>
<svg class="r" style="left:1546px;top:1113px;" width="22" height="12" viewBox="0 0 22 12"><path d="M1 11L11 1.5L21 11" fill="none" stroke="#fff" stroke-width="1.6"/></svg>
<svg class="r" style="left:1596px;top:1110px;" width="26" height="21" viewBox="0 0 26 21"><path d="M1 7H5L11 1.5V19.5L5 14H1Z" fill="none" stroke="#fff" stroke-width="1.5"/><path d="M15 7Q17 10.5 15 14M18.5 4.5Q21.5 10.5 18.5 16.5" fill="none" stroke="#fff" stroke-width="1.5"/><path d="M22 2Q26 10.5 22 19" fill="none" stroke="#8f98a5" stroke-width="1.5"/></svg>
<svg class="r" style="left:1646px;top:1111px;" width="27" height="18" viewBox="0 0 27 18"><path d="M5 17C2 17 0 15 0 12C0 9 2.5 7 5 7C6 3 9.5 1 13 1C17 1 20 3.5 21 7C24.5 7 27 9.5 27 12.5C27 15 25 17 22 17Z" fill="#1c8ae0"/><path d="M5 17C2 17 0 15 0 12.5L12 9L27 13C27 15 25 17 22 17Z" fill="#2aa7f0"/></svg>
<svg class="r" style="left:1698px;top:1113px;" width="27" height="15" viewBox="0 0 27 15"><rect x="1" y="1" width="22.5" height="13" fill="none" stroke="#fff" stroke-width="1.6"/><rect x="3.5" y="3.5" width="8.5" height="8" fill="#fff"/><rect x="24.5" y="5" width="2" height="5" fill="#fff"/></svg>
<svg class="r" style="left:1752px;top:1110px;" width="22" height="22" viewBox="0 0 22 22"><path d="M1.5 20.5A19 19 0 0 1 20.5 1.5M5.5 20.5A15 15 0 0 1 20.5 5.5M9.5 20.5A11 11 0 0 1 20.5 9.5" fill="none" stroke="#fff" stroke-width="1.5"/><circle cx="19" cy="19" r="2" fill="#fff"/></svg>
<svg class="r" style="left:1808px;top:1108px;" width="24" height="24" viewBox="0 0 24 24"><path d="M6 20L18 3Q20 1 21.5 3Q22.5 4.5 21 6.5L9 22Z" fill="none" stroke="#fff" stroke-width="1.6"/><path d="M11 8C4 6 0 12 3 17C5 21 9 19 10 15M15 12C19 12 23 13 22 16" fill="none" stroke="#fff" stroke-width="1.6"/></svg>
<div class="t" style="left:1846.80px;width:120px;text-align:center;top:1096.86px;font-size:19.3px;color:#eeeef2;">8:25 AM</div>
<div class="t" style="left:1847.10px;width:120px;text-align:center;top:1126.64px;font-size:19.8px;color:#eeeef2;">2/26/2020</div>
<svg class="r" style="left:1981px;top:1106px;" width="28" height="29" viewBox="0 0 28 29"><path d="M1.5 1.5H26.5V21.5H19L14 26.5L9 21.5H1.5Z" fill="none" stroke="#fff" stroke-width="1.6"/></svg>
<svg class="r" style="left:4px;top:101px;" width="57" height="57" viewBox="0 0 57 57"><circle cx="28.5" cy="28.5" r="27" fill="#fdfdfd" stroke="#cfcfd3" stroke-width="1.2"/><path d="M41.5 28.5H17M28 17.5L16.5 28.5L28 39.5" fill="none" stroke="#4a4a4f" stroke-width="2.8" stroke-linecap="round" stroke-linejoin="round"/></svg>
<svg class="r" style="left:71px;top:118px;" width="28" height="23" viewBox="0 0 28 23"><path d="M1.5 11.5H25.5M15.5 1.5L25.5 11.5L15.5 21.5" fill="none" stroke="#b4b4b8" stroke-width="2.6" stroke-linecap="round" stroke-linejoin="round"/></svg>
<svg class="r" style="left:123px;top:117px;" width="28" height="26" viewBox="0 0 28 26"><path d="M22 8A11 11 0 1 0 24 15" fill="none" stroke="#4a4a4f" stroke-width="2.8"/><path d="M25.5 1.5V10.5H16.5Z" fill="#4a4a4f"/></svg>
<svg class="r" style="left:174px;top:116px;" width="28" height="28" viewBox="0 0 28 28"><path d="M14 2L2 13.5V26H26V13.5Z" fill="none" stroke="#4a4a4f" stroke-width="2.8" stroke-linejoin="round"/><rect x="11.5" y="17" width="5" height="9" fill="#4a4a4f"/></svg>
<svg class="r" style="left:413px;top:118px;" width="21" height="24" viewBox="0 0 21 24"><path d="M10.5 1.5C6 1.5 2.5 2.8 1.8 3.3C1.5 9 2.5 18 10.5 22.5C18.5 18 19.5 9 19.2 3.3C18.5 2.8 15 1.5 10.5 1.5Z" fill="none" stroke="#5a5a5e" stroke-width="2.6"/><path d="M10.5 6.5V17C8.5 15 7 11 6.8 7.2Z" fill="#5a5a5e"/></svg>
<svg class="r" style="left:459px;top:118px;" width="21" height="24" viewBox="0 0 21 24"><path d="M5 11V7.5A5.5 5.5 0 0 1 16 7.5V11" fill="none" stroke="#606064" stroke-width="2.6"/><rect x="0.5" y="10.5" width="20" height="13" rx="1.5" fill="#606064"/></svg>
<svg class="r" style="left:1458px;top:126px;" width="8" height="8" viewBox="0 0 8 8"><circle cx="4" cy="4" r="3" fill="#4a4a4f"/></svg>
<svg class="r" style="left:1468px;top:126px;" width="8" height="8" viewBox="0 0 8 8"><circle cx="4" cy="4" r="3" fill="#4a4a4f"/></svg>
<svg class="r" style="left:1478px;top:126px;" width="8" height="8" viewBox="0 0 8 8"><circle cx="4" cy="4" r="3" fill="#4a4a4f"/></svg>
<svg class="r" style="left:1505px;top:118px;" width="26" height="24" viewBox="0 0 26 24"><path d="M2 2H24V10C24 17 19 22 13 22C7 22 2 17 2 10Z" fill="none" stroke="#4a4a4f" stroke-width="2.6" stroke-linejoin="round"/><path d="M7.5 9L13 14.5L18.5 9" fill="none" stroke="#4a4a4f" stroke-width="2.6"/></svg>
<svg class="r" style="left:1549px;top:116px;" width="28" height="27" viewBox="0 0 28 27"><path d="M14 2L17.6 9.6L25.8 10.6L19.8 16.3L21.3 24.5L14 20.5L6.7 24.5L8.2 16.3L2.2 10.6L10.4 9.6Z" fill="none" stroke="#4a4a4f" stroke-width="2.4" stroke-linejoin="round"/></svg>
<svg class="r" style="left:1787px;top:117px;" width="24" height="27" viewBox="0 0 24 27"><path d="M12 2V19M4 11.5L12 19.5L20 11.5" fill="none" stroke="#0a84ff" stroke-width="2.8" stroke-linecap="round" stroke-linejoin="round"/><path d="M3 24.5H21" stroke="#0a84ff" stroke-width="2.8" stroke-linecap="round"/></svg>
<svg class="r" style="left:1838px;top:117px;" width="27" height="26" viewBox="0 0 27 26"><path d="M2 2.5V23.5M7.5 4V23.5M12.5 4V23.5M17.5 3.5L25 23.5" fill="none" stroke="#4a4a4f" stroke-width="2.6" stroke-linecap="round"/></svg>
<svg class="r" style="left:1888px;top:117px;" width="28" height="25" viewBox="0 0 28 25"><rect x="1.8" y="2" width="24.4" height="21" rx="3.5" fill="none" stroke="#4a4a4f" stroke-width="2.6"/><path d="M12 2.5V22.5" stroke="#4a4a4f" stroke-width="2.2"/><path d="M4.8 6.5H9M4.8 9.5H9M5.5 12.5H8.5" stroke="#4a4a4f" stroke-width="1.3"/></svg>
<svg class="r" style="left:1941px;top:118px;" width="24" height="24" viewBox="0 0 24 24"><circle cx="12" cy="12" r="10.8" fill="none" stroke="#4a4a4f" stroke-width="1.9"/><circle cx="12" cy="9" r="4.3" fill="#4a4a4f"/><path d="M4.8 15.5Q6 14.2 7.8 14.6Q12 16.5 16.2 14.6Q18 14.2 19.2 15.5Q17 20 12 20Q7 20 4.8 15.5Z" fill="#4a4a4f"/></svg>
<svg class="r" style="left:2007px;top:119px;" width="22" height="22" viewBox="0 0 22 22"><path d="M2 2.5H20M2 11H20M2 19.5H20" stroke="#4a4a4f" stroke-width="2.6" stroke-linecap="round"/></svg>
<svg class="r" style="left:764px;top:60px;" width="20" height="24" viewBox="0 0 20 24"><path d="M10 1C6 1 2.5 2.5 1.5 3C1 10 3 18 10 23C17 18 19 10 18.5 3C17.5 2.5 14 1 10 1Z" fill="#e8853a" stroke="#9c4f1c" stroke-width="1"/><path d="M5 7H15M5 10H15M5 13H15M6 16H14" stroke="#b85d22" stroke-width="1.2"/></svg>
<svg class="r" style="left:1013px;top:60px;" width="24" height="24" viewBox="0 0 24 24"><rect x="0" y="0" width="11.3" height="11.3" fill="#f25022"/><rect x="12.7" y="0" width="11.3" height="11.3" fill="#7fba00"/><rect x="0" y="12.7" width="11.3" height="11.3" fill="#00a4ef"/><rect x="12.7" y="12.7" width="11.3" height="11.3" fill="#ffb900"/></svg>
<svg class="r" style="left:1263px;top:60px;" width="26" height="24" viewBox="0 0 26 24"><defs><linearGradient id="iog" x1="0" y1="0" x2="1" y2="1"><stop offset="0" stop-color="#2d4fb5"/><stop offset="1" stop-color="#8a3aa8"/></linearGradient></defs><circle cx="3.2" cy="3.2" r="2.6" fill="#1e8fd6"/><path d="M0.5 7.5H5.5V23.5Q0.5 23 0.5 19Z" fill="#3450b0"/><path d="M8 7.5H17A8 8 0 1 1 8 16Z" fill="url(#iog)"/><circle cx="16" cy="16" r="4.4" fill="#f9f9fa"/><circle cx="16.6" cy="16.6" r="1.6" fill="#6a3ca8"/></svg>
<svg class="r" style="left:1512px;top:59px;" width="26" height="26" viewBox="0 0 26 26"><rect x="9" y="3" width="17" height="20" rx="1.5" fill="#1a8ae0"/><path d="M9 12L26 12V23H9Z" fill="#0f6cc4"/><rect x="0" y="6" width="15" height="15" rx="1.5" fill="#0a62b5"/><ellipse cx="7.5" cy="13.5" rx="3.8" ry="4.3" fill="none" stroke="#fff" stroke-width="2"/></svg>
<svg class="r" style="left:1761px;top:59px;" width="26" height="26" viewBox="0 0 26 26"><path d="M24.5 13.3c0-.9-.1-1.7-.2-2.5H13v4.7h6.5c-.3 1.5-1.1 2.7-2.4 3.6v3h3.9c2.2-2.1 3.5-5.1 3.5-8.8z" fill="#4285F4"/><path d="M13 25c3.2 0 6-1.1 8-2.9l-3.9-3c-1.1.7-2.5 1.2-4.1 1.2-3.1 0-5.8-2.1-6.7-5H2.3v3.1C4.3 22.3 8.3 25 13 25z" fill="#34A853"/><path d="M6.3 15.3c-.2-.7-.4-1.5-.4-2.3s.1-1.6.4-2.3V7.6H2.3C1.5 9.2 1 11 1 13s.5 3.8 1.3 5.4l4-3.1z" fill="#FBBC05"/><path d="M13 5.7c1.8 0 3.3.6 4.6 1.8l3.4-3.4C19 2.2 16.2 1 13 1 8.3 1 4.3 3.7 2.3 7.6l4 3.1c.9-2.9 3.6-5 6.7-5z" fill="#EA4335"/></svg>
<svg class="r" style="left:14px;top:190px;" width="45" height="43" viewBox="0 0 45 43"><path d="M0.8 0.7H5.8A4.5 4.5 0 0 1 10.3 5.2A4.6 4.6 0 0 1 5.7 9.8A4.9 4.9 0 0 1 0.8 4.9Z" fill="#fff"/><path d="M1.8 11.7H5.8Q10 11.7 10 15.9V41.5Q1.8 40.5 1.8 32Z" fill="#fff"/><path d="M13.7 11.7H28.5A14.9 15 0 1 1 13.7 26.7Z" fill="#fff"/><circle cx="28.5" cy="26.7" r="8.4" fill="#2f3441"/><circle cx="28.5" cy="26.7" r="5.5" fill="#fff"/><circle cx="26.6" cy="23.7" r="2.7" fill="#2f3441"/></svg>
<div class="t " style="left:65.00px;top:201.80px;font-size:29.3px;color:#ffffff;font-weight:bold;letter-spacing:0.1px;">assessment</div>
<div class="t " style="left:160.00px;top:229.18px;font-size:9.0px;color:#ffffff;font-weight:bold;">Formerly EADMS</div>
<svg class="r" style="left:18px;top:293px;" width="19" height="12" viewBox="0 0 19 12"><path d="M1 1C4 0 8 2 9.5 6C11 3 14 1 18 2C17 5 15 8 11.5 8L10 11L7 8C3 8 1 5 1 1Z" fill="#cfd2d8"/></svg>
<svg class="r" style="left:15px;top:341px;" width="14" height="12" viewBox="0 0 14 12"><path d="M2 11A6.5 6.5 0 1 1 12 11Z" fill="#cfd2d8"/><path d="M7 9.5L8.8 5" stroke="#2f3441" stroke-width="1.3"/><circle cx="3.3" cy="7" r="0.9" fill="#2f3441"/><circle cx="5" cy="3.8" r="0.9" fill="#2f3441"/><circle cx="9" cy="3.8" r="0.9" fill="#2f3441"/><circle cx="10.7" cy="7" r="0.9" fill="#2f3441"/></svg>
<svg class="r" style="left:16px;top:388px;" width="11" height="13" viewBox="0 0 11 13"><path d="M0 0H7L11 4V13H0Z" fill="#cfd2d8"/><path d="M2.5 7H8.5M2.5 9.5H8.5" stroke="#2f3441" stroke-width="1"/><path d="M7 0V4H11" fill="#9fa3ab"/></svg>
<svg class="r" style="left:15px;top:436px;" width="14" height="11" viewBox="0 0 14 11"><path d="M1 0V10.3H14" fill="none" stroke="#cfd2d8" stroke-width="1.3"/><path d="M4 9V5M6.5 9V2.5M9 9V4.5M11.5 9V1.5" stroke="#cfd2d8" stroke-width="1.6"/></svg>
<svg class="r" style="left:17px;top:485px;" width="13" height="13" viewBox="0 0 13 13"><path d="M1.5 12L9 4.5M4 1.5L12 9.5M10.5 11.5L12.5 9.5" stroke="#cfd2d8" stroke-width="2"/><path d="M0.5 3.5L3.5 0.5L5.5 2.5L2.5 5.5Z" fill="#cfd2d8"/><circle cx="10.5" cy="2.5" r="2.2" fill="#cfd2d8"/></svg>
<svg class="r" style="left:15px;top:533px;" width="13" height="13" viewBox="0 0 13 13"><circle cx="6.5" cy="6.5" r="6" fill="#cfd2d8"/><path d="M4.5 5Q4.5 3 6.5 3Q8.5 3 8.5 4.8Q8.5 6 6.8 6.8V8" fill="none" stroke="#2f3441" stroke-width="1.4"/><circle cx="6.8" cy="10" r="0.9" fill="#2f3441"/></svg>
<svg class="r" style="left:1670px;top:248px;" width="19" height="18" viewBox="0 0 19 18"><g fill="#2a2a2a"><circle cx="7" cy="8" r="4.8"/><g stroke="#2a2a2a" stroke-width="2.4"><path d="M7 1.5V14.5M0.5 8H13.5M2.4 3.4L11.6 12.6M11.6 3.4L2.4 12.6"/></g><circle cx="14.5" cy="4" r="2.8"/><circle cx="14.5" cy="13.5" r="2.8"/></g><circle cx="7" cy="8" r="1.8" fill="#f4f4f4"/><circle cx="14.5" cy="4" r="1" fill="#f4f4f4"/><circle cx="14.5" cy="13.5" r="1" fill="#f4f4f4"/></svg>
<svg class="r" style="left:1713px;top:248px;" width="18" height="17" viewBox="0 0 18 17"><g fill="#19b0e0"><circle cx="9" cy="4.5" r="3.5"/><circle cx="3.3" cy="4.8" r="2.6"/><circle cx="14.7" cy="4.8" r="2.6"/><path d="M3.5 17V12Q3.5 8.5 9 8.5Q14.5 8.5 14.5 12V17Z"/><path d="M0 13V10Q0 8 3 8Q5 8 5 9.5V13Z"/><path d="M18 13V10Q18 8 15 8Q13 8 13 9.5V13Z"/></g></svg>
<svg class="r" style="left:1810px;top:248px;" width="13" height="16" viewBox="0 0 13 16"><path d="M0 0H8.5L12.5 4V15.5H0Z" fill="#9b7ad9"/><path d="M8.5 0V4H12.5" fill="#c8b4ee"/></svg>
<svg class="r" style="left:1882px;top:247px;" width="17" height="16" viewBox="0 0 17 16"><rect x="1" y="0.5" width="15" height="15" fill="#fff" stroke="#ddd" stroke-width="0.6"/><path d="M8 1.5C7 4 6 8 2.5 10M8 1.5C8.5 5 10 8 15 9M2.5 10C6 9 10 9 15 9" fill="none" stroke="#e52020" stroke-width="1.3"/><rect x="0" y="11.5" width="17" height="4.5" fill="#e61b1b"/></svg>
<svg class="r" style="left:1923px;top:247px;" width="17" height="16" viewBox="0 0 17 16"><rect x="3" y="1" width="13" height="14" fill="#fff" stroke="#ddd" stroke-width="0.6"/><path d="M1 0.5L5.5 7M5.5 0.5L1 7" stroke="#4aa43a" stroke-width="1.6"/><rect x="0" y="10.5" width="17" height="5" fill="#3f8f2f"/></svg>
<svg class="r" style="left:1966px;top:248px;" width="16" height="15" viewBox="0 0 16 15"><path d="M0 0H12.5L16 3.5V15H0Z" fill="#1c1f2e"/><rect x="3.5" y="0" width="8" height="5" fill="#f4f4f4"/><rect x="8.5" y="0.8" width="2" height="3.5" fill="#1c1f2e"/><rect x="3" y="9" width="10" height="6" fill="#f4f4f4"/></svg>
<svg class="r" style="left:518px;top:318px;" width="12" height="9" viewBox="0 0 12 9"><path d="M0.8 0V8.2H12" fill="none" stroke="#fff" stroke-width="1.1"/><path d="M3.5 7V4M5.8 7V2M8 7V3.5M10.2 7V1" stroke="#fff" stroke-width="1.4"/></svg>
<!--PAGE-->
</body></html>
